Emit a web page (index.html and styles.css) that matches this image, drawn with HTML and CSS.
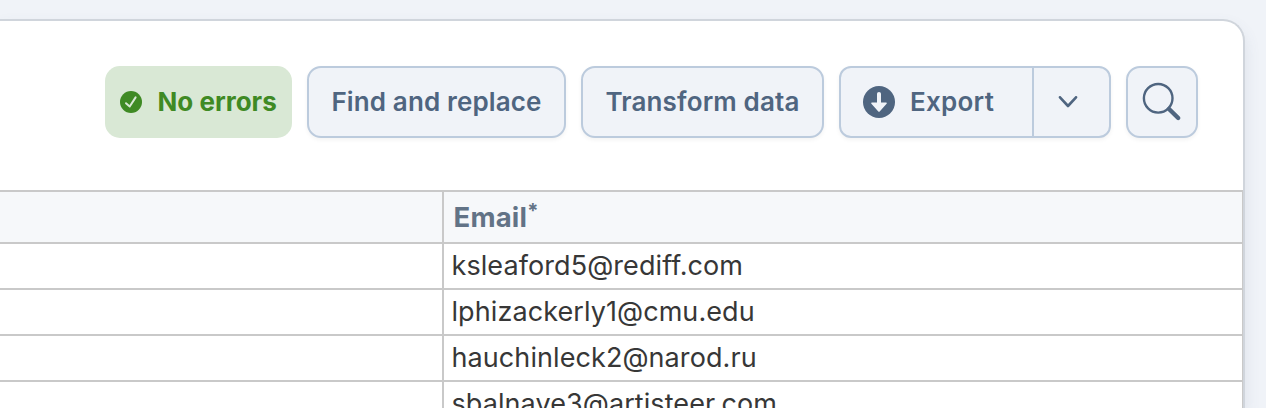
FILE: index.html
```html
<!DOCTYPE html>
<html lang="en">
<head>
<meta charset="utf-8">
<title>Data import</title>
<link rel="stylesheet" href="styles.css">
</head>
<body>
<main class="card">
  <div class="toolbar">
    <div class="status">
      <svg class="status-icon" viewBox="0 0 22 22"><circle cx="11" cy="11" r="11" fill="#3f8a24"/><path d="M6 12.2 9.7 15.5 15.6 6.4" fill="none" stroke="#d9e8d5" stroke-width="2" stroke-linecap="round" stroke-linejoin="round"/></svg>
      <span class="status-label">No errors</span>
    </div>
    <button class="btn find">Find and replace</button>
    <button class="btn transform">Transform data</button>
    <div class="split">
      <button class="split-main">
        <svg class="export-icon" viewBox="0 0 32 32"><circle cx="16" cy="16" r="16" fill="#4f6580"/><path d="M14 7.8Q14 6 16 6T18 7.8V16.5H23.2Q24.4 16.7 23.6 17.8L16.9 25.2Q16 26.2 15.1 25.2L8.4 17.8Q7.6 16.7 8.8 16.5H14Z" fill="#f0f3f8"/></svg>
        <span>Export</span>
      </button>
      <button class="split-toggle" aria-label="More export options">
        <svg class="chevron" viewBox="0 0 20 12"><path d="M2 1.3 10 10 18 1.3" fill="none" stroke="#4f6580" stroke-width="2.6" stroke-linecap="round" stroke-linejoin="round"/></svg>
      </button>
    </div>
    <button class="btn search" aria-label="Search">
      <svg class="search-icon" viewBox="0 0 40 40"><circle cx="16.2" cy="16.3" r="14.3" fill="none" stroke="#4f6580" stroke-width="2.4"/><path d="m27 27 9.2 9" stroke="#4f6580" stroke-width="4.4" stroke-linecap="round"/></svg>
    </button>
  </div>
  <div class="table">
    <div class="row head"><div class="cell"></div><div class="cell"><span class="heading">Email</span><span class="required">*</span></div></div>
    <div class="row"><div class="cell"></div><div class="cell">ksleaford5@rediff.com</div></div>
    <div class="row"><div class="cell"></div><div class="cell">lphizackerly1@cmu.edu</div></div>
    <div class="row"><div class="cell"></div><div class="cell">hauchinleck2@narod.ru</div></div>
    <div class="row"><div class="cell"></div><div class="cell">sbalnave3@artisteer.com</div></div>
  </div>
</main>
</body>
</html>
```
FILE: styles.css
```css
* { box-sizing: border-box; }
body { margin: 0; height: 408px; overflow: hidden; padding-top: 19px; background: #f0f3f8; font: 26px/32px Inter, "Liberation Sans", sans-serif; }
svg { display: block; flex: none; }
button { margin: 0; font: inherit; color: inherit; letter-spacing: inherit; background: none; border: 0; padding: 0; white-space: nowrap; }
.card { width: 1245px; height: 389px; overflow: hidden; background: #fff; border: 2px solid #d0d5dc; border-left: 0; border-bottom: 0; border-radius: 0 22px 0 0; box-shadow: 0 8px 16px rgba(80, 102, 128, .12); }
.toolbar { display: flex; justify-content: flex-end; gap: 15px; height: 169px; padding: 45px 45px 0 0; color: #4f6580; font-weight: 600; letter-spacing: .14px; }
.status { display: flex; align-items: center; width: 187px; height: 72px; padding-left: 15px; gap: 15.5px; border-radius: 15px; background: #d9e8d5; color: #3f8a24; white-space: nowrap; font-weight: 700; letter-spacing: 0; }
.status-icon { width: 22px; height: 22px; }
.btn, .split { height: 72px; border: 2px solid #bccbdd; border-radius: 14px; background: #f0f3f8; box-shadow: 0 2px 4px rgba(0, 0, 0, .05); }
.find { width: 259px; }
.transform { width: 243px; }
.split { display: flex; width: 272px; border-radius: 12px; }
.split-main { display: flex; align-items: center; gap: 15px; width: 191px; padding-left: 22px; letter-spacing: .25px; }
.split-toggle { display: flex; align-items: center; justify-content: center; flex: 1; border-left: 2px solid #bccbdd; padding-right: 7px; }
.export-icon { width: 32px; height: 32px; }
.chevron { width: 20px; height: 12px; }
.search { display: flex; width: 72px; padding: 14px 0 0 14px; }
.search-icon { width: 40px; height: 40px; }
.table { width: 1244px; border-top: 2px solid #c9c9c9; }
.row { display: grid; grid-template-columns: 444px 800px; height: 46px; color: #373737; font-size: 27px; letter-spacing: .08px; }
.cell { border-right: 2px solid #c9c9c9; border-bottom: 2px solid #c9c9c9; padding: 6px 7.5px 0; white-space: nowrap; overflow: hidden; }
.head { height: 52px; background: #f6f8fa; color: #627386; font-weight: 700; letter-spacing: 0; }
.head .cell { display: flex; padding: 9px 9.5px 0; }
.heading { font-size: 27.5px; letter-spacing: .2px; }
.required { font-size: 20px; line-height: 20px; }
```
